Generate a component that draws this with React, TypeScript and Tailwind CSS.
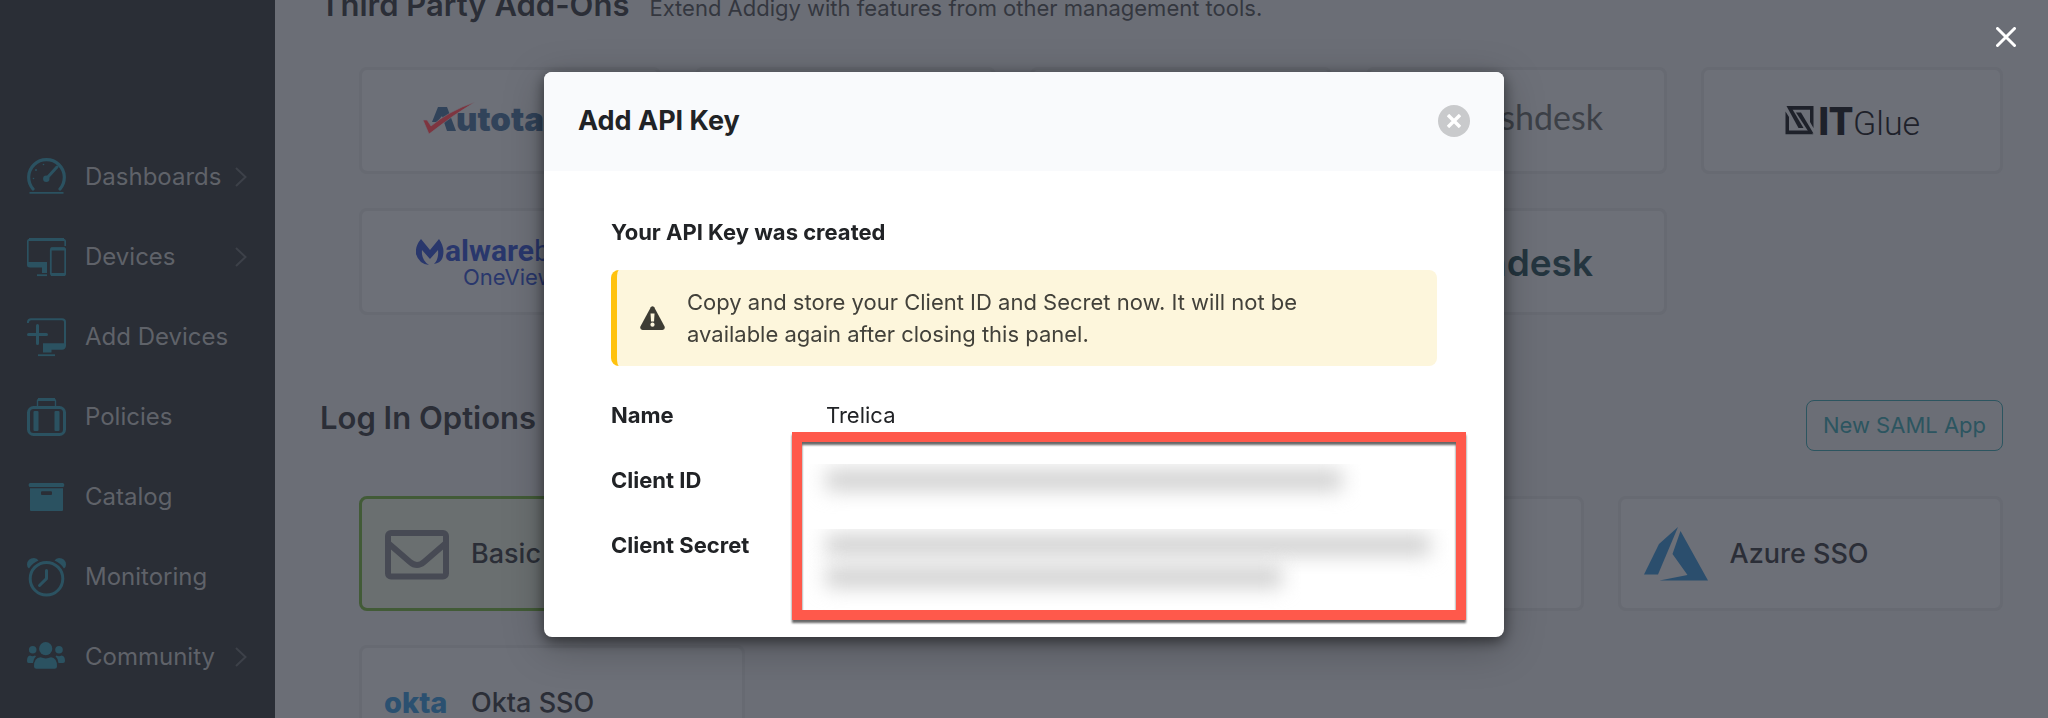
import React from 'react';

const navItems = [
    { label: 'Dashboards', icon: <GaugeIcon />, hasMenu: true },
    { label: 'Devices', icon: <DevicesIcon />, hasMenu: true },
    { label: 'Add Devices', icon: <AddDeviceIcon />, hasMenu: false },
    { label: 'Policies', icon: <PoliciesIcon />, hasMenu: false },
    { label: 'Catalog', icon: <CatalogIcon />, hasMenu: false },
    { label: 'Monitoring', icon: <MonitoringIcon />, hasMenu: false },
    { label: 'Community', icon: <CommunityIcon />, hasMenu: true },
];

function NavSvg({ children }: { children: React.ReactNode }) {
    return (
        <svg
            className="size-[39px] shrink-0 text-[#2b5261]"
            viewBox="0 0 39 39"
            fill="none"
            stroke="currentColor"
            aria-hidden="true"
        >
            {children}
        </svg>
    );
}

function GaugeIcon() {
    return (
        <NavSvg>
            <path d="M6 31A17.8 17.8 0 1 1 33 31" strokeWidth="3.2" strokeLinecap="round" />
            <path d="M2.5 34.8H36.5" strokeWidth="1.8" />
            <path d="M19.5 20.5L30 9" strokeWidth="3" strokeLinecap="round" />
            <circle cx="19.3" cy="20.8" r="3.2" fill="currentColor" stroke="none" />
            <g fill="currentColor" stroke="none">
                <circle cx="6.5" cy="20.5" r=".8" />
                <circle cx="9" cy="12" r="1" />
                <circle cx="16.5" cy="6.5" r=".8" />
            </g>
        </NavSvg>
    );
}

function DevicesIcon() {
    return (
        <NavSvg>
            <path d="M.8 26V3.5Q.8 1.5 3 1.5H36Q38.2 1.5 38.2 3.5V8" strokeWidth="1.7" />
            <path d="M2 1.5H37" strokeWidth="3" />
            <path d="M0 24H20V35H15V29.5H3Q0 29.5 0 27Z" fill="currentColor" stroke="none" />
            <path d="M10 37.2H20" strokeWidth="1.8" />
            <rect x="23.8" y="10.2" width="14.4" height="26.8" rx="1.5" strokeWidth="1.8" />
            <path d="M24 11H38M24 36.5H38" strokeWidth="3" />
        </NavSvg>
    );
}

function AddDeviceIcon() {
    return (
        <NavSvg>
            <path d="M.8 5Q1 1.3 4 1.3H35Q38 1.3 38 4V28" strokeWidth="2" />
            <path d="M16 25.2H39V28Q38.5 31.7 35 31.7H24.5V34.6H16Z" fill="currentColor" stroke="none" />
            <path d="M11 37.2H28" strokeWidth="1.8" />
            <path d="M1.5 16.4H19.5M10.5 7.5V25.5" strokeWidth="3" strokeLinecap="round" />
        </NavSvg>
    );
}

function PoliciesIcon() {
    return (
        <NavSvg>
            <path d="M10.5 8V2.5Q10.5 1.5 12 1.5H27Q28.5 1.5 28.5 2.5V8" strokeWidth="1.4" />
            <path d="M11 1.5H28" strokeWidth="3" />
            <rect x="1.5" y="9.5" width="36" height="27" rx="5" strokeWidth="3" />
            <g fill="currentColor" stroke="none">
                <rect x="6.5" y="13" width="5" height="20" rx="1" />
                <rect x="27.5" y="13" width="5" height="20" rx="1" />
            </g>
        </NavSvg>
    );
}

function CatalogIcon() {
    return (
        <NavSvg>
            <g fill="currentColor" stroke="none">
                <rect x="1.7" y="5" width="35.5" height="4" rx="1.5" />
                <path
                    fillRule="evenodd"
                    d="M3 10.3H36V32Q36 33 35 33H4Q3 33 3 32ZM15 13.3Q14 13.3 14 14.3V16Q14 17 15 17H24Q25 17 25 16V14.3Q25 13.3 24 13.3Z"
                />
            </g>
        </NavSvg>
    );
}

function MonitoringIcon() {
    return (
        <NavSvg>
            <circle cx="19.5" cy="20.7" r="16.3" strokeWidth="3" />
            <path d="M19.5 12.5V20.7L12.5 27.5" strokeWidth="3" strokeLinecap="round" strokeLinejoin="round" />
            <g fill="currentColor" stroke="none">
                <path d="M2 10.5Q0 9.5 0 6.5Q.5 0 7 0Q10 0 11.5 2.5Q5.5 5 2 10.5Z" />
                <path d="M37 10.5Q39 9.5 39 6.5Q38.5 0 32 0Q29 0 27.5 2.5Q33.5 5 37 10.5Z" />
            </g>
        </NavSvg>
    );
}

function CommunityIcon() {
    return (
        <NavSvg>
            <g fill="currentColor" stroke="none">
                <circle cx="18.7" cy="10.7" r="6.6" />
                <path d="M7 28.5Q7 19.5 13.5 19.3Q18.7 21.5 24 19.3Q30 19.5 30 28.5Q30 30.7 27.5 30.7H9.5Q7 30.7 7 28.5Z" />
                <circle cx="5.7" cy="11.7" r="3.8" />
                <circle cx="32" cy="11.7" r="3.8" />
                <path d="M0 23Q0 17.7 3 17.5Q5.5 18.8 8 17.5L9 18.3Q6.5 20.5 6 25H1.5Q0 25 0 23Z" />
                <path d="M38 23Q38 17.7 34.5 17.5Q32 18.8 29.5 17.5L28.5 18.3Q31 20.5 31.5 25H36Q38 25 38 23Z" />
            </g>
        </NavSvg>
    );
}

function Sidebar() {
    return (
        <aside className="w-[275px] shrink-0 bg-[#2a2e36] pt-[137px]">
            <nav>
                {navItems.map((item) => (
                    <a
                        key={item.label}
                        href="#"
                        className="flex h-20 items-center pl-[27px] pr-7 text-2xl text-[#5f6269]"
                    >
                        {item.icon}
                        <span className="ml-[19px] flex-1 whitespace-nowrap">{item.label}</span>
                        {item.hasMenu && (
                            <svg
                                className="h-5 w-3 shrink-0"
                                viewBox="0 0 12 20"
                                fill="none"
                                stroke="#3d4149"
                                strokeWidth="2"
                                aria-hidden="true"
                            >
                                <path d="M1 1L10.5 10L1 19" />
                            </svg>
                        )}
                    </a>
                ))}
            </nav>
        </aside>
    );
}

/* Partner logos */

function AutotaskLogo() {
    return (
        <svg className="overflow-visible" width="174" height="36" viewBox="0 2 174 36" role="img" aria-label="Autotask">
            <path d="M15 6H24L33 30H24L19 15L14 21H9Z" fill="#31435a" />
            <text x="33" y="30" fontFamily="Inter, sans-serif" fontSize="33" fontWeight="900" fill="#31435a">
                utotask
            </text>
            <path d="M0 19L4 19L8 25Q26 10 52 1Q30 14 6 33Z" fill="#7e3540" stroke="#6d7078" strokeWidth=".6" />
        </svg>
    );
}

function MalwarebytesLogo() {
    return (
        <svg width="188" height="56" viewBox="0 0 188 56" role="img" aria-label="Malwarebytes OneView">
            <path
                d="M5 5L14 16L23 5Q30 15 26 25Q24 29 18 30Q23 25 22 16L14 25L6 16Q5 26 13 31Q3 30 0 20Q-1 12 5 5Z"
                fill="#29376c"
            />
            <text x="29" y="27" fontFamily="Roboto, sans-serif" fontSize="30" fontWeight="700" fill="#29376c">
                alware
                <tspan fontWeight="400">bytes</tspan>
            </text>
            <text x="47" y="51" fontFamily="Inter, sans-serif" fontSize="22" fill="#29376c">
                OneView
            </text>
        </svg>
    );
}

function FreshdeskLogo() {
    return (
        <svg width="172" height="40" viewBox="0 0 172 40" role="img" aria-label="freshdesk">
            <text x="172" y="29" textAnchor="end" fontFamily="Lato, sans-serif" fontSize="34" fill="#3c4047">
                freshdesk
            </text>
        </svg>
    );
}

function ZendeskLogo() {
    return (
        <svg width="152" height="44" viewBox="0 0 152 44" role="img" aria-label="zendesk">
            <text
                x="152"
                y="36"
                textAnchor="end"
                fontFamily="Inter, sans-serif"
                fontSize="37"
                fontWeight="600"
                fill="#24353f"
            >
                zendesk
            </text>
        </svg>
    );
}

function ItGlueLogo() {
    return (
        <svg
            className="overflow-visible"
            width="136"
            height="40"
            viewBox="0 0 136 40"
            role="img"
            aria-label="IT Glue"
            fill="#1e212a"
        >
            <g transform="translate(1.5 5)">
                <path d="M4 0H28V22L24.5 16V3.8H6Z" />
                <path d="M0 5.5L3.5 11V24.5H24L27.8 28.3H0Z" />
                <path d="M1 0H5L18 22H13Z" />
                <path d="M10.5 6.5H15.5L28 27.5L23.5 26.5Z" />
            </g>
            <text x="34" y="34" fontFamily="Roboto, sans-serif" fontSize="38" fontWeight="900">
                IT
            </text>
            <text x="69" y="34" fontFamily="Roboto, sans-serif" fontSize="34" fontWeight="300">
                Glue
            </text>
        </svg>
    );
}

function MailIcon() {
    return (
        <svg width="64" height="50" viewBox="0 0 64 50" fill="none" stroke="#474a54" strokeWidth="6" aria-hidden="true">
            <rect x="3" y="3" width="58" height="43.5" rx="3" />
            <path d="M3 13L25 32Q32 38 39 32L61 13" />
        </svg>
    );
}

function AzureIcon() {
    return (
        <svg width="64" height="56" viewBox="0 0 64 56" fill="#2b4e6d" aria-hidden="true">
            <path d="M34 0L15 17L0 47.5H14Z" />
            <path d="M36.5 4L28.5 27L43.5 48L15.5 53.5H64Z" />
        </svg>
    );
}

function OktaLogo() {
    return (
        <svg className="overflow-visible" width="64" height="32" viewBox="0 0 64 32" aria-hidden="true">
            <text x="-1" y="25" fontFamily="Inter, sans-serif" fontSize="29" fontWeight="800" fill="#2b5070">
                okta
            </text>
        </svg>
    );
}

function AddOnCard({ children }: { children?: React.ReactNode }) {
    return (
        <div className="flex h-[107px] items-center justify-center rounded-lg border-[3px] border-[#676a72] bg-[#6d7078]">
            {children}
        </div>
    );
}

function LoginCard({ icon, label, active }: { icon?: React.ReactNode; label?: string; active?: boolean }) {
    const colors = active ? 'border-[#425b37] bg-[#6a6f70]' : 'border-[#676a72] bg-[#6d7078]';
    return (
        <div className={`flex h-[115px] items-center gap-[22px] rounded-lg border-[3px] px-[23px] pt-0.5 ${colors}`}>
            {icon}
            <span className="text-[27px] font-medium text-[#2b2e37]">{label}</span>
        </div>
    );
}

function Integrations() {
    return (
        <main className="-mt-[13px] min-w-0 flex-1 px-[45px]">
            <header className="flex h-9 items-baseline gap-5">
                <h2 className="text-[31px] leading-9 font-semibold text-[#2b2e37]">Third Party Add-Ons</h2>
                <p className="text-[22px] leading-8 text-[#34373f]">
                    Extend Addigy with features from other management tools.
                </p>
            </header>
            <div className="mt-11 ml-[39px] grid grid-cols-5 gap-[34px]">
                <AddOnCard>
                    <AutotaskLogo />
                </AddOnCard>
                <AddOnCard />
                <AddOnCard />
                <AddOnCard>
                    <FreshdeskLogo />
                </AddOnCard>
                <AddOnCard>
                    <ItGlueLogo />
                </AddOnCard>
                <AddOnCard>
                    <MalwarebytesLogo />
                </AddOnCard>
                <AddOnCard />
                <AddOnCard />
                <AddOnCard>
                    <ZendeskLogo />
                </AddOnCard>
            </div>

            <header className="mt-[85px] flex items-start justify-between">
                <h2 className="text-[31px] leading-9 font-semibold text-[#2b2e37]">Log In Options</h2>
                <button
                    type="button"
                    className="h-[51px] rounded-lg border border-[#2c5560] px-4 text-[22px] text-[#2c5560]"
                >
                    New SAML App
                </button>
            </header>
            <div className="mt-[45px] ml-[39px] grid grid-cols-4 gap-[34px]">
                <LoginCard icon={<MailIcon />} label="Basic" active />
                <LoginCard />
                <LoginCard />
                <LoginCard icon={<AzureIcon />} label="Azure SSO" />
                <LoginCard icon={<OktaLogo />} label="Okta SSO" />
            </div>
        </main>
    );
}

/* Smudged out credential, one bar per line of text */
function Redacted({ lines }: { lines: string[] }) {
    return (
        <div className="[clip-path:inset(0_-40px_-30px_-40px)]" aria-hidden="true">
            {lines.map((width) => (
                <div key={width} className="flex h-8 items-center">
                    <div className={`h-5 bg-[#cdcdcd] blur-[10px] ${width}`} />
                </div>
            ))}
        </div>
    );
}

function ApiKeyModal() {
    return (
        <div className="fixed inset-0 flex items-start justify-center pt-[72px]">
            <button type="button" aria-label="Close overlay" className="absolute top-6 right-[29px] p-[3px] text-white">
                <svg width="20" height="20" viewBox="0 0 20 20" stroke="currentColor" strokeWidth="3" strokeLinecap="round">
                    <path d="M1.5 1.5L18.5 18.5M18.5 1.5L1.5 18.5" />
                </svg>
            </button>

            <div
                role="dialog"
                aria-labelledby="api-key-title"
                className="relative w-full max-w-[960px] rounded-lg bg-white text-[22px] leading-8 text-[#212326] shadow-[0_4px_14px_rgba(0,0,0,0.5),0_10px_40px_rgba(0,0,0,0.25)]"
            >
                <div className="flex h-[99px] items-center justify-between rounded-t-lg bg-[#f9fafc] px-[34px] pb-0.5">
                    <h1 id="api-key-title" className="text-[27px] font-bold">
                        Add API Key
                    </h1>
                    <button
                        type="button"
                        aria-label="Close"
                        className="flex size-8 items-center justify-center rounded-full bg-[#c9cacc]"
                    >
                        <svg width="14" height="14" viewBox="0 0 14 14" stroke="white" strokeWidth="3.4">
                            <path d="M1 1L13 13M13 1L1 13" />
                        </svg>
                    </button>
                </div>

                <div className="px-[67px] pt-[45px] pb-11">
                    <h2 className="font-bold">Your API Key was created</h2>
                    <div className="mt-[22px] flex items-center rounded-lg border-l-[6px] border-[#ffc20e] bg-[#fdf6dc] py-4 pl-[23px] text-[#42413a]">
                        <svg className="shrink-0" width="25" height="24" viewBox="0 0 25 24" aria-hidden="true">
                            <path
                                d="M10.8 1.2Q12.5-.8 14.2 1.2L24.6 20.5Q25.4 23.6 22.5 24H2.5Q-.4 23.6 .4 20.5Z"
                                fill="#3d3c34"
                            />
                            <path d="M10.5 7.5H14.5L14 15.5H11Z" fill="#fdf6dc" />
                            <circle cx="12.5" cy="18.7" r="2.1" fill="#fdf6dc" />
                        </svg>
                        <p className="ml-[22px] max-w-[640px]">
                            Copy and store your Client ID and Secret now. It will not be
                            <br />
                            available again after closing this panel.
                        </p>
                    </div>

                    <dl className="mt-[33px] grid grid-cols-[215px_1fr] gap-y-[33px]">
                        <dt className="font-bold">Name</dt>
                        <dd>Trelica</dd>
                        <dt className="font-bold">Client ID</dt>
                        <dd>
                            <Redacted lines={['w-[516px]']} />
                        </dd>
                        <dt className="font-bold">Client Secret</dt>
                        <dd>
                            <Redacted lines={['w-[604px]', 'w-[456px]']} />
                        </dd>
                    </dl>
                </div>

                {/* Callout frame drawn over the credentials */}
                <div className="pointer-events-none absolute top-[360px] right-[38px] bottom-[17px] left-[248px] border-[10px] border-[#ff594b] drop-shadow-[0_3px_1px_rgba(0,0,0,0.6)]" />
            </div>
        </div>
    );
}

export default function App() {
    return (
        <div className="flex h-screen items-stretch overflow-hidden bg-[#6b6e76] font-[Inter,'Liberation_Sans',sans-serif]">
            <Sidebar />
            <Integrations />
            <ApiKeyModal />
        </div>
    );
}
